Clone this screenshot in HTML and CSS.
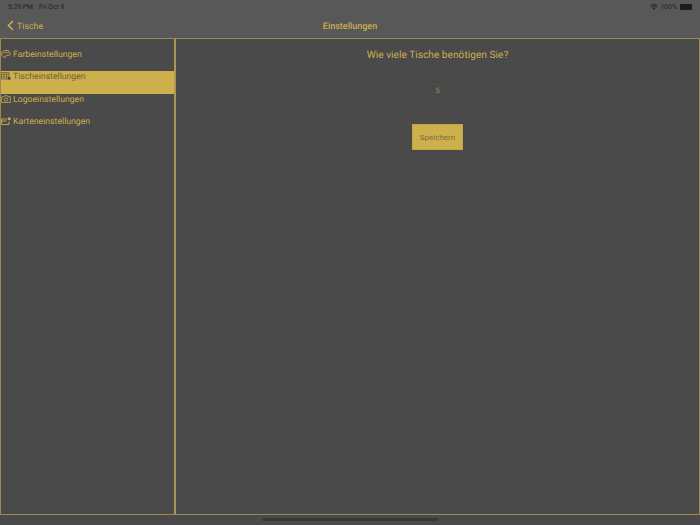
FILE: index.html
```html
<!DOCTYPE html>
<html lang="de">
<head>
<meta charset="utf-8">
<title>Einstellungen</title>
<link rel="stylesheet" href="styles.css">
</head>
<body>
<header class="top">
  <div class="status">
    <span class="status-time">5:29 PM</span>
    <span class="status-date">Fri Oct 9</span>
    <span class="status-right">
      <svg class="wifi" viewBox="0 0 12 9" width="8" height="6"><path d="M.6 3A7.800 7.800 0 0 1 11.400 3M2.400 5A5.200 5.200 0 0 1 9.600 5" fill="none" stroke="#222" stroke-width="1.500"/><path d="M4 6.700A2.700 2.700 0 0 1 8 6.700L6 8.800Z" fill="#222"/></svg>
      <span class="pct">100%</span>
      <span class="battery"></span>
    </span>
  </div>
  <div class="nav">
    <a class="back">
      <svg viewBox="0 0 8 12" width="7" height="11"><path d="M6.800 1 L1.600 6 L6.800 11" fill="none" stroke="#cbae4e" stroke-width="1.700"/></svg>
      <span class="back-label">Tische</span>
    </a>
    <h1 class="title">Einstellungen</h1>
  </div>
</header>
<main class="panes">
  <aside class="side">
    <ul class="menu">
      <li class="item">
        <svg class="ico" viewBox="0 0 10 10"><path d="M5 1.500C2.400 1.500.6 3 .6 5c0 1.900 1.800 3.400 3.600 3.400.9 0 1-.6.8-1.100-.2-.6.2-1 .9-1h1.600c1 0 1.900-.5 1.900-1.600C9.400 2.700 7.400 1.500 5 1.500Z" fill="none" stroke="#cbae4e" stroke-width=".9"/><circle cx="3" cy="4" r=".7" fill="#cbae4e"/><circle cx="5" cy="3.200" r=".7" fill="#cbae4e"/><circle cx="7" cy="4" r=".7" fill="#cbae4e"/></svg>
        <span>Farbeinstellungen</span>
      </li>
      <li class="item active">
        <svg class="ico" viewBox="0 0 10 10"><path d="M.5 1.500h7.500v6.500h-7.500zM.5 3.600h7.500M.5 5.800h7.500M3 1.500v6.500M5.500 1.500v6.500" fill="none" stroke="#6b6038" stroke-width=".8"/><circle cx="8.300" cy="7.300" r="1.500" fill="#4a4a4a"/></svg>
        <span>Tischeinstellungen</span>
      </li>
      <li class="item">
        <svg class="ico" viewBox="0 0 10 10"><path d="M.6 2.800h2.200l.7-1h3l.7 1h2.200v5.700h-8.800z" fill="none" stroke="#cbae4e" stroke-width=".8"/><circle cx="5" cy="5.500" r="1.700" fill="none" stroke="#cbae4e" stroke-width=".8"/></svg>
        <span>Logoeinstellungen</span>
      </li>
      <li class="item">
        <svg class="ico" viewBox="0 0 10 10"><path d="M.6 3h5.600M.6 3v5.500h7.400V5.500M.6 5h5" fill="none" stroke="#cbae4e" stroke-width=".9"/><circle cx="8.200" cy="2.700" r="1.500" fill="#cbae4e"/></svg>
        <span>Karteneinstellungen</span>
      </li>
    </ul>
  </aside>
  <section class="content">
    <h2 class="question">Wie viele Tische benötigen Sie?</h2>
    <div class="field">5</div>
    <button class="save" type="button">Speichern</button>
  </section>
</main>
<footer class="bottom"><span class="home"></span></footer>
</body>
</html>
```
FILE: styles.css
```css
* { box-sizing: border-box; }
html, body { height: 100%; }
body {
  margin: 0;
  width: 700px;
  height: 525px;
  overflow: hidden;
  display: flex;
  flex-direction: column;
  background: #4a4a4a;
  color: #cbae4e;
  font-family: "Roboto", "Liberation Sans", sans-serif;
  text-rendering: geometricPrecision;
}
.top {
  height: 38px;
  flex: none;
  background: #585858;
  display: flex;
  flex-direction: column;
}
.status {
  height: 13px;
  display: flex;
  align-items: center;
  padding: 0 8px;
  font-size: 6.800px;
  color: #1f1f1f;
}
.status-date { margin-left: 6px; }
.status-right { margin-left: auto; display: flex; align-items: center; gap: 3px; }
.wifi { display: block; }
.battery { width: 12px; height: 6px; background: #1c1c1c; border-radius: 1px; }
.nav {
  flex: 1;
  position: relative;
  display: flex;
  align-items: center;
  justify-content: center;
  padding-top: 2px;
}
.back {
  position: absolute;
  left: 7px;
  top: 50%;
  transform: translateY(-50%);
  display: flex;
  align-items: center;
  gap: 3px;
  font-size: 8.800px;
}
.back svg { display: block; }
.back-label { margin-top: 2px; }
.title { margin: 0; font-size: 9px; font-weight: 500; }
.panes {
  flex: none;
  height: 477px;
  display: flex;
  border: 1px solid #9c8a4e;
}
.side {
  width: 175px;
  flex: none;
  border-right: 2px solid #ab9650;
  padding-top: 9.500px;
}
.menu { list-style: none; margin: 0; padding: 0; }
.item {
  height: 22.500px;
  display: flex;
  align-items: flex-start;
  gap: 2px;
  font-size: 8.700px;
  line-height: 12px;
}
.item.active { background: #cdb04c; color: #6b6038; }
.ico { width: 10px; height: 10px; flex: none; }
.content {
  flex: 1;
  display: flex;
  flex-direction: column;
  align-items: center;
}
.question {
  margin: 10px 0 0;
  font-size: 10.200px;
  line-height: 13px;
  font-weight: 400;
}
.field {
  width: 60px;
  height: 18px;
  margin-top: 19px;
  border: 1px solid #474747;
  border-radius: 2px;
  display: flex;
  align-items: center;
  justify-content: center;
  font-size: 7.500px;
  color: #a08c47;
}
.save {
  width: 51px;
  height: 26px;
  margin-top: 25px;
  padding: 0;
  border: 1px solid #c0a448;
  background: #cdb04c;
  color: #766b45;
  font-family: inherit;
  font-size: 8px;
}
.bottom {
  flex: 1;
  display: flex;
  justify-content: center;
  align-items: flex-start;
  padding-top: 3px;
}
.home { width: 176px; height: 3px; background: #383838; border-radius: 2px; }
```
